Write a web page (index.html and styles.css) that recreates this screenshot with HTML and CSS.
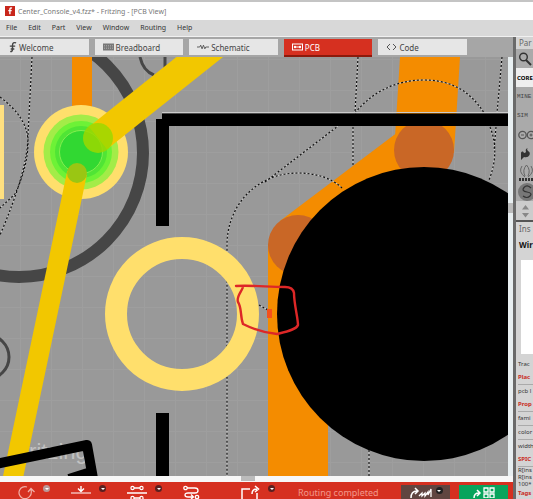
FILE: index.html
```html
<!DOCTYPE html>
<html lang="en">
<head>
<meta charset="utf-8">
<title>Fritzing</title>
<link rel="stylesheet" href="styles.css">
</head>
<body>
<header class="titlebar">
  <svg class="logo" viewBox="0 0 10 10" aria-hidden="true"><rect width="10" height="10" fill="#c8261b"/><path d="M7 2.2C5.6 1.6 4.900 2.200 4.900 3.400V8.200M3.300 4.600H6.700" fill="none" stroke="#fff" stroke-width="1.400"/></svg>
  <span>Center_Console_v4.fzz* - Fritzing - [PCB View]</span>
</header>
<nav class="menu">
  <button>File</button><button>Edit</button><button>Part</button><button>View</button><button>Window</button><button>Routing</button><button>Help</button>
</nav>
<div class="workspace">
  <main class="editor">
    <div class="tabs">
      <button class="tab"><svg width="9" height="12" viewBox="0 0 10 12"><path d="M9 1.500C6.500.5 5 1.500 5 4V8.500C5 10.500 4 11.300 2.500 10.800M2 5H8M3 8.200H7" fill="none" stroke="#444" stroke-width="1.600"/></svg>Welcome</button>
      <button class="tab"><svg width="11" height="8" viewBox="0 0 11 8"><rect width="11" height="7" y=".5" fill="#777"/><path d="M1 2.500H10M1 4H10M1 5.500H10" stroke="#bbb" stroke-width=".6" stroke-dasharray="1 1"/></svg>Breadboard</button>
      <button class="tab"><svg width="12" height="8" viewBox="0 0 13 8"><path d="M0 4H3L4 2 5.500 6 7 2 8.500 6 9.500 4H13" fill="none" stroke="#555"/></svg>Schematic</button>
      <button class="tab active"><svg width="11" height="8" viewBox="0 0 11 8"><rect x=".5" y="1" width="10" height="6" fill="none" stroke="#fff"/><path d="M3 4H8" stroke="#fff"/><circle cx="3" cy="4" r="1.200" fill="#fff"/><circle cx="8" cy="4" r="1.200" fill="#fff"/></svg>PCB</button>
      <button class="tab"><svg width="11" height="8" viewBox="0 0 11 8"><path d="M4 1 1 4 4 7M7 1 10 4 7 7" fill="none" stroke="#555"/></svg>Code</button>
    </div>
    <div class="view">
      <svg class="board" viewBox="0 57 508 419" preserveAspectRatio="xMinYMin slice" role="img" aria-label="PCB layout">
        <defs>
          <pattern id="grid" x="20" y="90" width="31" height="31" patternUnits="userSpaceOnUse"><path d="M0 .5H31M.5 0V31" stroke="#9e9e9e" fill="none"/></pattern>
          <g id="outline" fill="none">
            <path d="M32 57 28 135Q28 170 0 235M0 97Q28 118 28 142T15 194L0 208"/>
            <path d="M342 188C332 178 315 173 298 173C257 173 227 205 227 245V476M265 182 338 126M358 57 355 113M353 127V165"/>
            <path d="M355 113C372 92 396 80 424 80S471 92 484 113M490 127Q500 152 489 180M502 57 497 113M496 127 494 151M369 450V476M259 305 268 310"/>
          </g>
        </defs>
        <rect y="57" width="508" height="419" fill="#999"/>
        <rect y="57" width="508" height="419" fill="url(#grid)"/>
        <g fill="none" stroke="#464646">
          <circle cx="19" cy="153" r="124" stroke-width="12"/>
          <path d="M140 57Q143 71 154 75M165 57V72" stroke-width="3"/>
          <circle cx="-13" cy="357" r="22" stroke-width="3"/>
        </g>
        <rect y="105" width="4" height="94" fill="#ffe080"/>
        <rect x="72" y="57" width="20" height="60" fill="#f48c00"/>
        <g fill="#f48c00">
          <path d="M400 57H460L454 153H394ZM268 245H328V476H268Z"/>
          <path d="M298 245 424 150" stroke="#f48c00" stroke-width="60"/>
        </g>
        <g fill="#c96726"><circle cx="424" cy="150" r="30"/><circle cx="298" cy="245" r="30"/></g>
        <use href="#outline" stroke="#ccc"/>
        <use href="#outline" stroke="#111" stroke-width="1.200" stroke-dasharray="2 2"/>
        <circle cx="182" cy="314" r="66" fill="none" stroke="#ffdf6c" stroke-width="22"/>
        <circle cx="424" cy="314" r="147"/>
        <circle cx="81" cy="152" r="47" fill="#ffdf6c"/>
        <circle cx="81" cy="152" r="37.500" fill="#a3ec48"/>
        <circle cx="81" cy="152" r="31" fill="#6df236"/>
        <circle cx="81" cy="152" r="26" fill="#50e535"/>
        <circle cx="81" cy="152" r="21.500" fill="#31d832" stroke="#83ee50"/>
        <path d="M98 138 260 9" stroke="#f2c700" stroke-width="29"/>
        <circle cx="98" cy="138" r="15" fill="#9cd800" opacity=".85"/>
        <text class="watermark" x="23" y="459">fritzing</text>
        <path d="M77 173 12 482" stroke="#f2c700" stroke-width="20"/>
        <circle cx="77" cy="173" r="10" fill="#9ac613"/>
        <path d="M162 112.500H508" stroke="#ccc"/>
        <path d="M162 113.500H508V126H169V226H156V119H162ZM156 413H169V476H156Z"/>
        <path d="M-4 464 87 445 94 484M69 479 91 472" fill="none" stroke="#000" stroke-width="10" stroke-linejoin="round"/>
        <rect x="267" y="309" width="5" height="9" fill="#f4501c"/>
        <path d="M236 286C252 285 268 287 285 287Q293 287 294 293C294 304 298 318 298 325C296 330 285 332 277 334C265 333 251 328 243 324C240 316 242 308 238 302C236 297 242 291 243 287" fill="none" stroke="#dd2727" stroke-width="2.400" stroke-linecap="round" stroke-linejoin="round"/>
      </svg>
      <div class="vscroll"><i></i></div>
      <div class="hscroll"><i></i></div>
    </div>
    <footer class="toolbar">
      <button class="tool" aria-label="Rotate"><svg width="17" height="14" viewBox="0 0 17 14"><path d="M9 2A6 6 0 1 0 12 11Q14 9 13 4M10 7 13 3.500 16.500 7" fill="none" stroke="#f0b0a8" stroke-width="1.200"/></svg></button>
      <button class="drop pale" aria-label="Rotate options"></button>
      <button class="tool" aria-label="Layer"><svg width="20" height="14" viewBox="0 0 20 14"><path d="M10 1V6M7 3.500 10 6.500 13 3.500" fill="none" stroke="#fff" stroke-width="1.400"/><path d="M0 8H20" stroke="#fff"/></svg></button>
      <button class="drop" aria-label="Layer options"></button>
      <button class="tool" aria-label="Flip"><svg width="20" height="14" viewBox="0 0 20 14"><path d="M0 8H20M7 3H13M7 13H13" stroke="#fff" stroke-width="1.400"/><g fill="none" stroke="#fff" stroke-width="1.200"><circle cx="5.500" cy="3" r="1.600"/><circle cx="14.500" cy="3" r="1.600"/><circle cx="5.500" cy="13" r="1.600"/><circle cx="14.500" cy="13" r="1.600"/></g></svg></button>
      <button class="drop" aria-label="Flip options"></button>
      <button class="tool" aria-label="Autoroute"><svg width="17" height="14" viewBox="0 0 17 14"><g fill="none" stroke="#fff" stroke-width="1.300"><circle cx="2.500" cy="3" r="1.700"/><path d="M4 3H12Q15 3 15 5.500T12 8H5Q2 8 2 10T5 12H10M8 9.500 10.500 12 8 14"/><circle cx="14" cy="12" r="1.700"/></g></svg></button>
      <button class="tool share" aria-label="Export"><svg width="19" height="14" viewBox="0 0 19 14"><path d="M9 4H1V14M16 8V14M11 9Q11 4 16 4M14 1 17.500 4 14 7" fill="none" stroke="#fff" stroke-width="1.500"/></svg></button>
      <button class="drop" aria-label="Export options"></button>
      <span class="status">Routing completed</span>
      <button class="action dark" aria-label="Route"><svg width="24" height="13" viewBox="0 0 24 13"><path d="M2 13Q2 6 8 6M6 3 9 6 6 9" fill="none" stroke="#fff" stroke-width="1.500"/><path d="M10 11 13 8V11L16 8V11L19 7V10L22 4V12" fill="none" stroke="#fff" stroke-width="1.300"/></svg><i class="drop"></i></button>
      <button class="action green" aria-label="Fabricate"><svg width="22" height="13" viewBox="0 0 22 13"><path d="M1 13Q1 8 6 8M4 5 7 8 4 11" fill="none" stroke="#fff" stroke-width="1.500"/><path d="M11 3H15V7H11ZM17 3H21V7H17ZM11 9H15V13H11ZM17 9H21V13H17Z" fill="none" stroke="#fff" stroke-width="1.300"/></svg></button>
    </footer>
  </main>
  <aside class="side">
    <h2 class="head">Par</h2>
    <button class="bin" aria-label="Search"><svg width="14" height="14" viewBox="0 0 14 14"><circle cx="5.500" cy="5" r="3.800" fill="none" stroke="#333" stroke-width="1.400"/><path d="M8 8 13 13" stroke="#333" stroke-width="2"/></svg></button>
    <button class="bin core">CORE</button>
    <button class="bin pixel">MINE</button>
    <button class="bin pixel">SIM</button>
    <button class="bin" aria-label="Arduino"><svg width="18" height="10" viewBox="0 0 18 10"><g fill="none" stroke="#555" stroke-width="1.300"><circle cx="4.500" cy="5" r="3.700"/><circle cx="13" cy="5" r="3.700"/></g><path d="M3 5H6M11.500 5H14.500M13 3.500V6.500" stroke="#555"/></svg></button>
    <button class="bin" aria-label="Sparkfun"><svg width="14" height="14" viewBox="0 0 14 14"><path d="M3 13V6Q3 4 5 4.500Q6 7 8 5Q7 2 9.500 1Q8.500 3 10 4Q12.500 5 11.500 8Q10 11 6 10Z" fill="#333"/></svg></button>
    <button class="bin" aria-label="Seeed"><svg width="18" height="18" viewBox="0 0 18 18"><path d="M4 2Q0 8 7 13M13 2Q17 8 10 13M7 12Q4 6 8.500 1Q13 6 10 12" fill="none" stroke="#666"/><path d="M1 15.500H17" stroke="#333" stroke-width="3" stroke-dasharray="2 1"/></svg></button>
    <button class="bin" aria-label="Snootlab"><svg width="18" height="18" viewBox="0 0 18 18"><circle cx="9" cy="9" r="9" fill="#777"/><path d="M13 5Q9 1 6 4.500T9 9T12 13T5 13" fill="none" stroke="#333" stroke-width="1.200"/></svg></button>
    <button class="bin spin" aria-label="Scroll bins"><svg width="9" height="14" viewBox="0 0 9 14"><path d="M1 5.500 4.500 1 8 5.500ZM1 9 4.500 13.500 8 9Z" fill="#888"/></svg></button>
    <section class="inspector">
      <h2 class="head">Ins</h2>
      <h3 class="part">Wir</h3>
      <div class="preview"></div>
      <p>Trac</p>
      <h4>Plac</h4>
      <p class="rule">pcb l</p>
      <h4>Prop</h4>
      <p class="rule">fami</p>
      <p class="rule">color</p>
      <p class="rule">width</p>
      <h4>SPIC</h4>
      <p class="code rule">R[ins<br>R[ins<br>100*</p>
      <h4 class="tags">Tags</h4>
    </section>
  </aside>
</div>
</body>
</html>
```
FILE: styles.css
```css
* { box-sizing: border-box; }
body {
  margin: 0;
  height: 100vh;
  display: flex;
  flex-direction: column;
  overflow: hidden;
  background: #d8d8d8;
  color: #333;
  font-family: "Noto Sans", "Open Sans", sans-serif;
  font-size: 7px;
}
button { border: 0; padding: 0; margin: 0; background: none; color: inherit; font: inherit; }
svg { display: block; flex: none; }
h2, h3, h4, p { margin: 0; white-space: nowrap; }

.titlebar {
  display: flex;
  align-items: center;
  gap: 3px;
  height: 20px;
  padding-left: 5px;
  border-top: 2px solid #c4c4c4;
  background: #fff;
  color: #777;
}
.logo { width: 10px; height: 10px; }
.menu {
  display: flex;
  gap: 11px;
  height: 17px;
  padding: 0 6px 1px;
  background: #d8d8d8;
  border-bottom: 1px solid #f0f0f0;
}

.workspace { flex: 1; min-height: 0; display: flex; }
.editor { flex: 1; min-width: 0; display: flex; flex-direction: column; }
.tabs {
  display: grid;
  grid-template-columns: repeat(5, 1fr);
  gap: 6px;
  height: 20px;
  padding: 2px 46px 0 0;
  background: #a6a6a6;
}
.tab {
  display: flex;
  align-items: center;
  gap: 2px;
  height: 16px;
  padding-left: 8px;
  background: #e6e6e6;
  color: #444;
  font-size: 8px;
}
.active { height: 18px; background: #d63020; color: #fff; border-bottom: 2px solid #8c1a0c; }

.view {
  flex: 1;
  min-height: 0;
  display: grid;
  grid-template: minmax(0, 1fr) 6px / minmax(0, 1fr) 5px;
}
.board { width: 100%; height: 100%; }
.watermark { font: 22px "Liberation Sans", sans-serif; fill: #ddd; opacity: .6; }
.vscroll { background: #e8eff1; padding-top: 146px; }
.vscroll i { display: block; height: 10px; background: #bbb; }
.hscroll { grid-column: 1 / 3; background: #f7f7f7; padding-left: 47%; }
.hscroll i { display: block; width: 14px; height: 5px; background: #bbb; }

.toolbar {
  display: flex;
  align-items: flex-start;
  height: 17px;
  padding: 3px 5px 0 18px;
  background: #d63020;
  overflow: hidden;
}
.tool { margin-right: 8px; }
.drop {
  width: 7px;
  height: 7px;
  margin-right: 21px;
  border-radius: 50%;
  background: #5b2020;
  display: flex;
  justify-content: center;
  align-items: center;
}
.drop::after { content: ""; border: 2px solid transparent; border-top-color: #fff; border-bottom: 0; }
.pale { background: #b99; }
.share { margin-left: 33px; }
.status { flex: 1; padding-left: 2px; white-space: nowrap; line-height: 16px; font-size: 9px; color: #f2998c; }
.action { display: flex; justify-content: center; width: 49px; height: 14px; margin-left: 9px; }
.dark { background: #604540; }
.dark .drop { margin: 2px 0 0 3px; background: #222; }
.green { background: #08a45c; }

.side {
  width: 20px;
  overflow: hidden;
  border-left: 3px solid #6a6a6a;
  background: #d4d4d4;
}
.head { height: 12px; padding-left: 3px; line-height: 12px; font-size: 8px; font-weight: 400; color: #666; }
.bin {
  display: flex;
  align-items: center;
  width: 100%;
  height: 19px;
  padding-left: 2px;
  background: #aaa;
  overflow: hidden;
}
.core { padding-left: 1px; background: #eee; color: #000; font-size: 6px; font-weight: 700; }
.pixel { padding-left: 1px; font-family: "Liberation Mono", monospace; color: #444; font-size: 6px; }
.spin { padding-left: 5px; background: #ccc; }
.inspector { padding: 1px 0 0 2px; border-top: 2px solid #555; }
.inspector .head { padding-left: 1px; }
.part { margin-top: 3px; padding-left: 1px; font-size: 8px; line-height: 14px; color: #111; }
.preview { height: 94px; margin: 8px 0 4px 3px; background: #fff; }
.inspector p, .inspector h4 { font-size: 6px; line-height: 13px; }
.inspector h4 { color: #c92c24; }
.rule { border-top: 1px solid #aaa; }
.inspector .code { line-height: 7px; }
.inspector .tags { line-height: 10px; }
```
